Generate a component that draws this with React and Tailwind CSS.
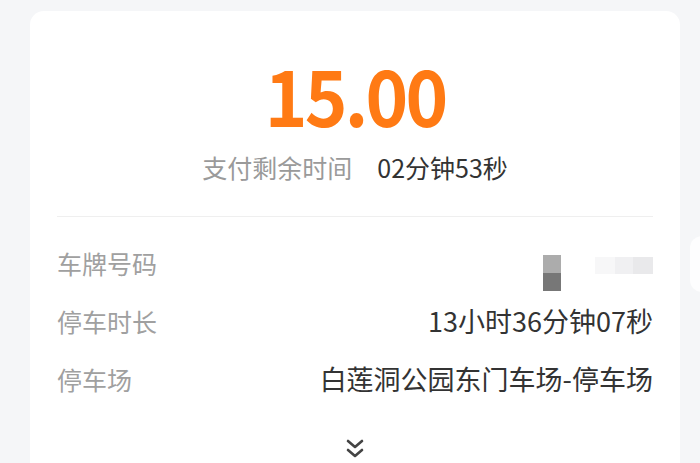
import React from 'react';

const rows = [
  { label: '车牌号码', value: null },
  { label: '停车时长', value: '13小时36分钟07秒' },
  { label: '停车场', value: '白莲洞公园东门车场-停车场' },
];

const App = () => {
  return (
    <div className="w-[700px] h-[463px] overflow-hidden bg-[#f5f6f8] relative font-['Noto_Sans_CJK_SC',sans-serif]">
      <div className="absolute right-[-14px] top-[236px] w-[24px] h-[56px] rounded-full bg-white/80"></div>
      <div className="ml-[30px] mt-[11px] w-[650px] h-[470px] bg-white rounded-[14px] px-[27px]">
        {/* 金额 */}
        <div className="pt-[34px] flex justify-center">
          <span className="text-[#ff7a14] font-bold text-[78px] leading-[96px] tracking-[-3px] scale-x-[0.93] inline-block">
            15.00
          </span>
        </div>
        <div className="mt-[10px] flex justify-center items-center text-[25px] leading-[32px]">
          <span className="text-[#9a9a9a]">支付剩余时间</span>
          <span className="ml-[25px] text-[#333]">02分钟53秒</span>
        </div>
        <div className="mt-[33px] border-t border-[#efefef]"></div>

        {/* 明细 */}
        <div className="pt-[30px] flex flex-col gap-[26px]">
          {rows.map(r => (
            <div key={r.label} className="flex items-center justify-between h-[32px] leading-[32px]">
              <span className="text-[#a0a0a0] text-[25px]">{r.label}</span>
              {r.value ? (
                <span className="text-[#333] text-[27px]">{r.value}</span>
              ) : (
                <div className="self-start mt-[8px] flex items-start gap-[34px]">
                  <div className="flex flex-col w-[18px]">
                    <div className="h-[18px] bg-[#acacac]"></div>
                    <div className="h-[18px] bg-[#777]"></div>
                  </div>
                  <div className="flex mt-[2px]">
                    <div className="w-[20px] h-[17px] bg-[#f7f7f8]"></div>
                    <div className="w-[18px] h-[17px] bg-[#f0f0f2]"></div>
                    <div className="w-[20px] h-[17px] bg-[#e9e9eb]"></div>
                  </div>
                </div>
              )}
            </div>
          ))}
        </div>

        <div className="mt-[43px] flex justify-center">
          <svg width="22" height="22" viewBox="0 0 22 22" fill="none" stroke="#444" strokeWidth="2.6" strokeLinecap="round" strokeLinejoin="round">
            <path d="M4 3 L11 9 L18 3" />
            <path d="M4 12 L11 18 L18 12" />
          </svg>
        </div>
      </div>
    </div>
  );
};

export default App;
